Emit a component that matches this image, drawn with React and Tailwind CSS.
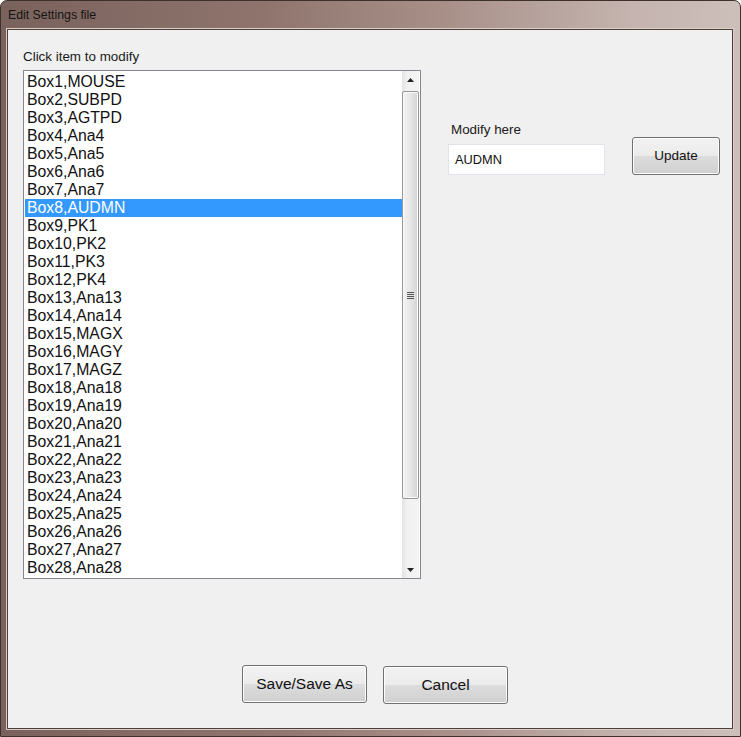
import React from "react";

const items = [
  "Box1,MOUSE", "Box2,SUBPD", "Box3,AGTPD", "Box4,Ana4", "Box5,Ana5", "Box6,Ana6", "Box7,Ana7",
  "Box8,AUDMN", "Box9,PK1", "Box10,PK2", "Box11,PK3", "Box12,PK4", "Box13,Ana13", "Box14,Ana14",
  "Box15,MAGX", "Box16,MAGY", "Box17,MAGZ", "Box18,Ana18", "Box19,Ana19", "Box20,Ana20",
  "Box21,Ana21", "Box22,Ana22", "Box23,Ana23", "Box24,Ana24", "Box25,Ana25", "Box26,Ana26",
  "Box27,Ana27", "Box28,Ana28",
];

function WinButton({ children, className = "" }) {
  return (
    <div
      className={
        "flex items-center justify-center rounded-[3px] border border-[#707070] bg-[linear-gradient(to_bottom,#f2f2f2_0%,#ebebeb_50%,#dddddd_51%,#cfcfcf_100%)] shadow-[inset_0_0_0_1px_#fcfcfc] text-[#111] " +
        className
      }
    >
      {children}
    </div>
  );
}

export default function App() {
  const font = { fontFamily: '"Liberation Sans", Arial, sans-serif' };
  return (
    <div
      className="w-[741px] h-[737px] flex flex-col rounded-t-[7px] border border-[#3e302c] bg-[linear-gradient(to_right,#7a625c_0%,#8e746d_35%,#a89089_60%,#c4b3ae_85%,#cdbfba_100%)] overflow-hidden"
      style={font}
    >
      <div className="h-[28px] flex items-center pl-[7px] text-[12.3px] text-[#141414] shrink-0">
        Edit Settings file
      </div>
      <div className="ml-[6px] mr-[7px] h-[700px] border border-[#4e3f3b] bg-[#f0f0f0] flex flex-col shadow-[0_0_0_1px_#d9cdc9]">
        <div className="flex flex-row">
          <div className="flex flex-col pl-[15px] pt-[19px]">
            <div className="h-[16px] leading-[16px] text-[13.4px] text-[#1a1a1a]">Click item to modify</div>
            <div className="mt-[5px] w-[398px] h-[509px] border border-[#828790] bg-white flex flex-row">
              <div className="flex-1 overflow-hidden pt-[2px] pl-[1px]">
                {items.map((t, i) => (
                  <div
                    key={t}
                    className={
                      "h-[18px] leading-[18px] pl-[2px] text-[15.8px] whitespace-nowrap " +
                      (i === 7 ? "bg-[#3399ff] text-white" : "text-[#111]")
                    }
                  >
                    {t}
                  </div>
                ))}
              </div>
              <div className="w-[17px] flex flex-col bg-[linear-gradient(to_right,#e4e4e4_0%,#f1f1f1_30%,#f4f4f4_100%)] mr-[1px]">
                <div className="h-[17px] flex items-center justify-center shrink-0">
                  <svg width="7" height="4" viewBox="0 0 7 4"><path d="M3.5 0 L7 4 L0 4 Z" fill="#222" /></svg>
                </div>
                <div className="mt-[3px] h-[408px] rounded-[2px] border border-[#979797] bg-[linear-gradient(to_right,#f3f3f3_0%,#e8e8e8_45%,#d4d4d4_100%)] shadow-[inset_0_0_0_1px_#fafafa] flex items-center justify-center shrink-0">
                  <div className="flex flex-col gap-[1px]">
                    <div className="w-[7px] h-[1px] bg-[#555]" />
                    <div className="w-[7px] h-[1px] bg-[#555]" />
                    <div className="w-[7px] h-[1px] bg-[#555]" />
                    <div className="w-[7px] h-[1px] bg-[#555]" />
                  </div>
                </div>
                <div className="flex-1" />
                <div className="h-[17px] flex items-center justify-center shrink-0">
                  <svg width="7" height="4" viewBox="0 0 7 4"><path d="M0 0 L7 0 L3.5 4 Z" fill="#222" /></svg>
                </div>
              </div>
            </div>
          </div>
          <div className="ml-[27px] flex flex-row gap-[27px]">
            <div className="pt-[92px] flex flex-col">
              <div className="h-[16px] leading-[16px] pl-[3px] text-[13.4px] text-[#1a1a1a]">Modify here</div>
              <div className="mt-[6px] w-[157px] h-[31px] border border-[#e2e3ea] bg-white flex items-center pl-[6px] text-[12.8px] text-[#111]">
                AUDMN
              </div>
            </div>
            <div className="pt-[107px]">
              <WinButton className="w-[88px] h-[38px] text-[13.5px]">Update</WinButton>
            </div>
          </div>
        </div>
        <div className="flex flex-row items-start pl-[234px] mt-[86px] gap-[16px]">
          <WinButton className="w-[125px] h-[38px] text-[15.5px]">Save/Save As</WinButton>
          <WinButton className="w-[125px] h-[38px] mt-[1px] text-[15.5px]">Cancel</WinButton>
        </div>
      </div>
    </div>
  );
}
